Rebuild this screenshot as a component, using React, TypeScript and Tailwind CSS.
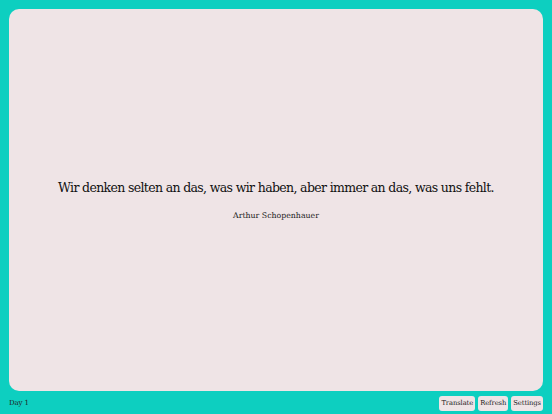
import React from "react";

export default function App() {
  const font = { fontFamily: '"DejaVu Serif", "Liberation Serif", serif' };
  return (
    <div className="h-[414px] w-[552px] bg-[#0dcfc0] flex flex-col px-[9px] pt-[9px]" style={font}>
      <div className="flex-1 rounded-[10px] bg-[#efe4e6] flex flex-col items-center justify-center pt-[2px]">
        <div className="text-[12.5px] text-[#111] leading-none tracking-[-0.65px]">
          Wir denken selten an das, was wir haben, aber immer an das, was uns fehlt.
        </div>
        <div className="mt-[17px] text-[7.8px] text-[#222] leading-none">Arthur Schopenhauer</div>
      </div>
      <div className="h-[23px] flex items-center justify-between pt-[1px]">
        <div className="text-[7px] text-[#222] tracking-[-0.1px]">Day 1</div>
        <div className="flex gap-[3px]">
          <button className="h-[15px] px-[2px] rounded-[3px] bg-[#efe4e6] text-[6.8px] tracking-[-0.1px] text-[#222]">Translate</button>
          <button className="h-[15px] px-[2px] rounded-[3px] bg-[#efe4e6] text-[6.8px] tracking-[-0.1px] text-[#222]">Refresh</button>
          <button className="h-[15px] px-[2px] rounded-[3px] bg-[#efe4e6] text-[6.8px] tracking-[-0.1px] text-[#222]">Settings</button>
        </div>
      </div>
    </div>
  );
}
